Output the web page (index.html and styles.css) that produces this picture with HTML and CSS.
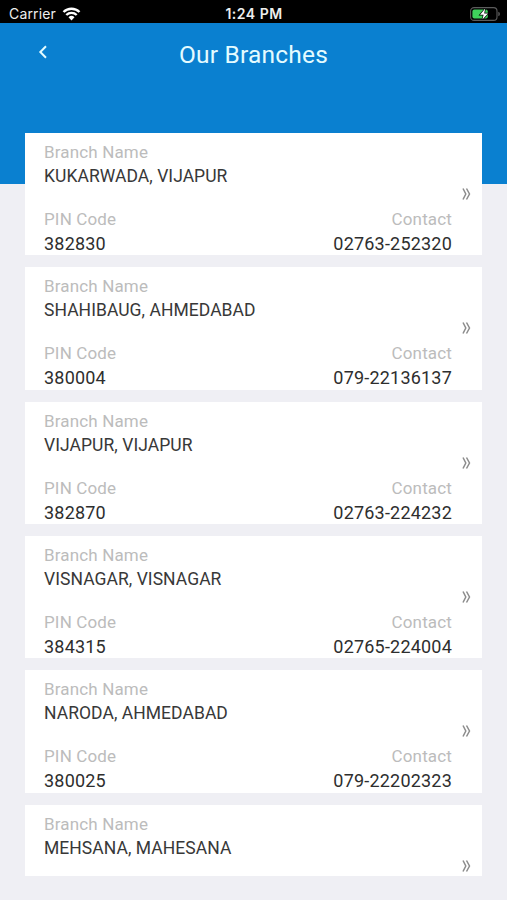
FILE: index.html
```html
<!DOCTYPE html>
<html lang="en">
<head>
    <meta charset="UTF-8">
    <meta name="viewport" content="width=device-width, initial-scale=1.0">
    <title>Our Branches</title>
    <link rel="stylesheet" href="styles.css">
</head>
<body>
    <div class="status">
        <div class="carrier">
            <span>Carrier</span>
            <svg class="wifi" width="19" height="14" viewBox="0 0 18 14">
                <path d="M1 5a11.5 11.5 0 0 1 16 0M3.8 8a7.5 7.5 0 0 1 10.4 0" fill="none" stroke="#fff" stroke-width="2.4"/>
                <path d="M9 13.5l-3-3.2a4.3 4.3 0 0 1 6 0z" fill="#fff"/>
            </svg>
        </div>
        <div class="time">1:24 PM</div>
        <div class="battery">
            <svg width="31" height="14" viewBox="0 0 31 14">
                <rect x="0.6" y="0.6" width="26.4" height="12.8" rx="3.5" fill="none" stroke="#5c5c5c" stroke-width="1.1"/>
                <rect x="2.4" y="2.4" width="15.4" height="9.2" rx="2" fill="#3fd15c"/>
                <path d="M28.3 4.8a2.3 2.3 0 0 1 0 4.4z" fill="#5c5c5c"/>
                <path d="M15.2 1.6L10 7.8h3.6l-1.2 4.8L18 6.4h-3.8z" fill="#fff" stroke="#000" stroke-width="1.4" paint-order="stroke"/>
            </svg>
        </div>
    </div>

    <header>
        <svg class="back" width="10" height="14" viewBox="0 0 10 14">
            <path d="M8 1.2L2.3 7 8 12.8" fill="none" stroke="#e4fbff" stroke-width="2"/>
        </svg>
        <h1>Our Branches</h1>
    </header>

    <main class="list" id="lista"></main>

    <script>
        const branches = [
            { name: "KUKARWADA, VIJAPUR", pin: "382830", contact: "02763-252320" },
            { name: "SHAHIBAUG, AHMEDABAD", pin: "380004", contact: "079-22136137" },
            { name: "VIJAPUR, VIJAPUR", pin: "382870", contact: "02763-224232" },
            { name: "VISNAGAR, VISNAGAR", pin: "384315", contact: "02765-224004" },
            { name: "NARODA, AHMEDABAD", pin: "380025", contact: "079-22202323" },
            { name: "MEHSANA, MAHESANA", pin: "", contact: "" }
        ];

        document.getElementById("lista").innerHTML = branches.map(b => `
            <div class="card">
                <div class="info">
                    <div class="label">Branch Name</div>
                    <div class="name">${b.name}</div>
                    ${b.pin ? `
                    <div class="row label"><span>PIN Code</span><span>Contact</span></div>
                    <div class="row number"><span>${b.pin}</span><span>${b.contact}</span></div>` : ""}
                </div>
                <svg class="more" width="9" height="12" viewBox="0 0 9 12">
                    <path d="M1 0.5L3.8 6 1 11.5M4.5 0.5L7.5 6 4.5 11.5" fill="none" stroke="#8c8c8c" stroke-width="1.5"/>
                </svg>
            </div>`).join("");
    </script>
</body>
</html>
```
FILE: styles.css
```css
*{
    margin: 0;
    padding: 0;
    box-sizing: border-box;
}
body {
    font-family: Roboto, sans-serif;
    background-color: #efeff4;
    height: 900px;
    overflow: hidden;
}
.status{
    display: grid;
    grid-template-columns: 1fr auto 1fr;
    align-items: center;
    height: 23px;
    padding: 4px 6px 0 9px;
    background-color: black;
    color: #eee;
    font-family: Inter, sans-serif;
    font-size: 14px;
}
.carrier{
    display: flex;
    align-items: center;
    gap: 6px;
    letter-spacing: 0.15px;
}
.time{
    margin-right: 2px;
    font-weight: 600;
    letter-spacing: 0.5px;
}
.battery{
    display: flex;
    justify-content: flex-end;
}
header{
    display: grid;
    grid-template-columns: 38px 1fr 38px;
    height: 161px;
    padding-top: 15px;
    background-color: #0a80d0;
    color: #e4fbff;
}
.back{
    margin: 7px 0 0 38px;
}
h1{
    padding-top: 1px;
    font-size: 24.5px;
    font-weight: 400;
    line-height: 32px;
    letter-spacing: 0.2px;
    text-align: center;
}
.list{
    display: flex;
    flex-direction: column;
    gap: 12px;
    height: 743px;
    margin: -51px 25px 0;
    overflow: hidden;
}
.card{
    display: flex;
    flex: none;
    height: 122.35px;
    padding: 7px 11px 0 19px;
    background-color: white;
}
.info{
    flex: 1;
}
.label{
    color: #bcbcbc;
    font-size: 17px;
    line-height: 24px;
    letter-spacing: 0.15px;
}
.name{
    height: 43px;
    color: #383838;
    font-size: 17.5px;
    line-height: 25px;
    letter-spacing: 0.05px;
}
.row{
    display: flex;
    justify-content: space-between;
}
.number{
    color: #2e2e2e;
    font-size: 18px;
    line-height: 25px;
    letter-spacing: 0.2px;
}
.more{
    margin: 48px 0 0 10px;
}
```
